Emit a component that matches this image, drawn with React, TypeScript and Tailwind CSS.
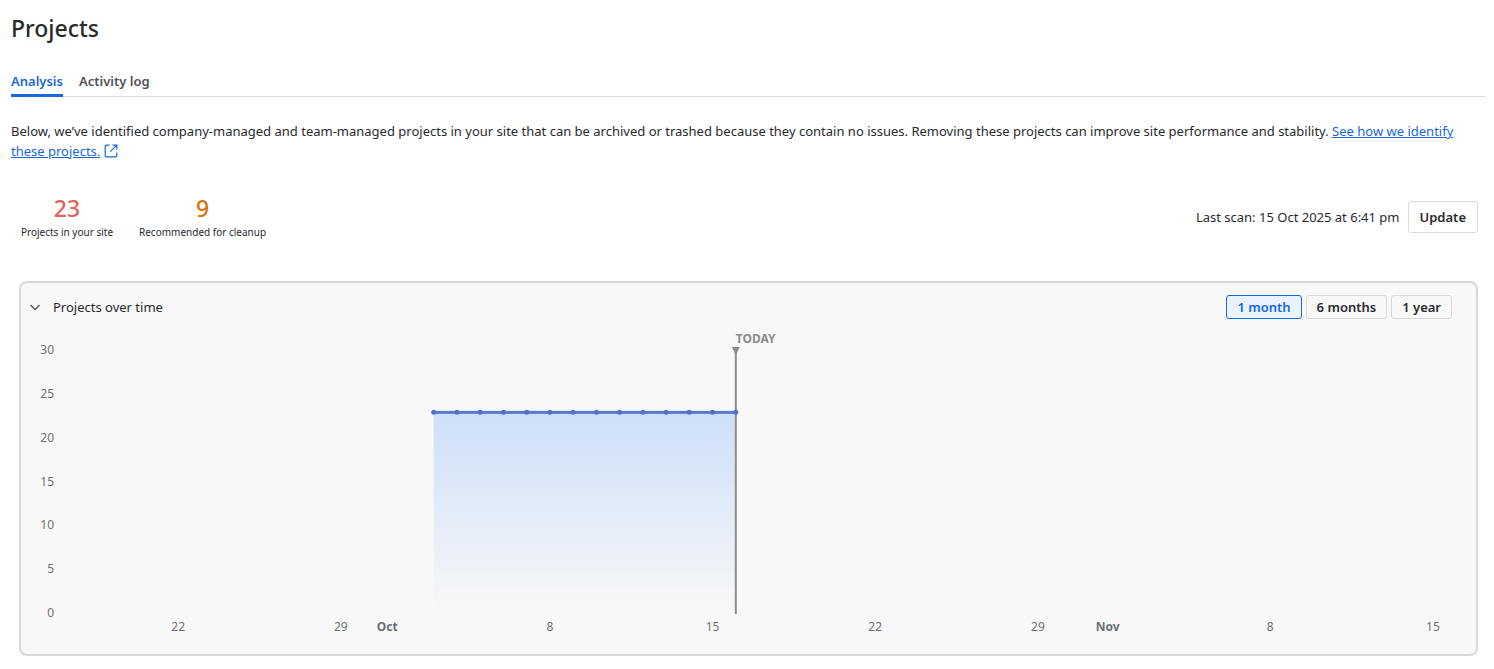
import { useState } from 'react';

interface Tick {
  day: number;
  label: string;
  bold?: boolean;
}

const TABS = ['Analysis', 'Activity log'];
const RANGES = ['1 month', '6 months', '1 year'];

// Days are counted from 22 Sep
const X_TICKS: Tick[] = [
  { day: 0, label: '22' },
  { day: 7, label: '29' },
  { day: 9, label: 'Oct', bold: true },
  { day: 16, label: '8' },
  { day: 23, label: '15' },
  { day: 30, label: '22' },
  { day: 37, label: '29' },
  { day: 40, label: 'Nov', bold: true },
  { day: 47, label: '8' },
  { day: 54, label: '15' },
];
const Y_TICKS = [30, 25, 20, 15, 10, 5, 0];

const FIRST_DAY = 11;
const TODAY = 24;
const POINTS = Array.from({ length: TODAY - FIRST_DAY + 1 }, (_, i) => ({ day: FIRST_DAY + i, total: 23 }));

const PLOT_TOP = 32;
const PLOT_BOTTOM = 295;

const toPercent = (day: number) => 10.8 + day * 1.597;
const toX = (day: number) => `${toPercent(day)}%`;
const toY = (value: number) => PLOT_BOTTOM - (value / 30) * (PLOT_BOTTOM - PLOT_TOP);

function ProjectsChart() {
  return (
    <svg className="block w-full h-[335px] text-xs" role="img" aria-label="Projects over time">
      <defs>
        <linearGradient id="area" x1="0" y1="0" x2="0" y2="1">
          <stop offset="0" stopColor="#cddff8" />
          <stop offset="1" stopColor="#f8f8f8" />
        </linearGradient>
      </defs>

      {Y_TICKS.map((v) => (
        <text key={v} x="33" y={toY(v) + 3} textAnchor="end" className="fill-[#6f7175]">
          {v}
        </text>
      ))}
      {X_TICKS.map((t) => (
        <text
          key={t.day}
          x={toX(t.day)}
          y="312"
          textAnchor="middle"
          className={t.bold ? 'fill-[#6b6e73] font-bold' : 'fill-[#6f7175]'}
        >
          {t.label}
        </text>
      ))}

      <rect
        x={toX(FIRST_DAY)}
        y={toY(23)}
        width={`${toPercent(TODAY) - toPercent(FIRST_DAY)}%`}
        height={PLOT_BOTTOM - toY(23)}
        fill="url(#area)"
      />
      {POINTS.slice(1).map((p, i) => (
        <line
          key={p.day}
          x1={toX(POINTS[i].day)}
          y1={toY(POINTS[i].total)}
          x2={toX(p.day)}
          y2={toY(p.total)}
          stroke="#5779cd"
          strokeWidth="3"
        />
      ))}

      {/* today marker */}
      <line x1={toX(TODAY)} y1="31" x2={toX(TODAY)} y2={PLOT_BOTTOM} stroke="#8c8c8c" strokeWidth="2" />
      <svg x={toX(TODAY)} y="28" overflow="visible">
        <path d="M-4 0h8l-4 8z" fill="#8c8c8c" />
      </svg>
      <text x={toX(TODAY)} y="24" className="fill-[#8c8c8c] font-bold">
        TODAY
      </text>

      {POINTS.map((p) => (
        <circle key={p.day} cx={toX(p.day)} cy={toY(p.total)} r="2.5" fill="#5470c6" />
      ))}
    </svg>
  );
}

function Stat({ value, label, color }: { value: number; label: string; color: string }) {
  return (
    <div className="min-w-24 text-center">
      <div className={`text-[23px] leading-7 font-medium ${color}`}>{value}</div>
      <div className="mt-0.5 text-[10px] leading-4">{label}</div>
    </div>
  );
}

export default function App() {
  const [tab, setTab] = useState('Analysis');
  const [range, setRange] = useState('1 month');
  const [open, setOpen] = useState(true);

  return (
    <main className="pt-3.5 pr-2 pb-3 pl-[11px] bg-white text-[#292a2e] text-[13px] leading-5 font-['Segoe_UI','Noto_Sans',sans-serif]">
      <h1 className="text-[23px] leading-7 font-medium">Projects</h1>

      <div role="tablist" className="mt-[29px] flex gap-4 border-b border-[#dddee1]">
        {TABS.map((t) => (
          <button
            key={t}
            role="tab"
            aria-selected={tab === t}
            onClick={() => setTab(t)}
            className={`-mb-px pb-[3px] border-b-3 font-semibold ${
              tab === t ? 'border-[#1868db] text-[#1868db]' : 'border-transparent text-[#505258]'
            }`}
          >
            {t}
          </button>
        ))}
      </div>

      <p className="mt-6">
        Below, we’ve identified company-managed and team-managed projects in your site that can be archived or trashed
        because they contain no issues. Removing these projects can improve site performance and stability.{' '}
        <a href="#identify" className="text-[#1868db]">
          <span className="underline">See how we identify these projects.</span>
          <svg
            className="inline ml-1 size-3.5 align-[-2px]"
            viewBox="0 0 14 14"
            fill="none"
            stroke="currentColor"
            strokeWidth="1.2"
            aria-hidden="true"
          >
            <path d="M5.5 1.2H2.2a1 1 0 0 0-1 1v9.6a1 1 0 0 0 1 1h9.6a1 1 0 0 0 1-1V8.5M8.5 1.2h4.3v4.3M12.8 1.2L6.3 7.7" />
          </svg>
        </a>
      </p>

      <div className="mt-[33px] pl-2 pr-2 flex items-center justify-between">
        <div className="flex gap-6">
          <Stat value={23} label="Projects in your site" color="text-[#e2635a]" />
          <Stat value={9} label="Recommended for cleanup" color="text-[#d97008]" />
        </div>
        <div className="flex items-center gap-2">
          <span>Last scan: 15 Oct 2025 at 6:41 pm</span>
          <button className="h-8 px-[11px] bg-white border border-[#d9dade] rounded-[3px] font-semibold">Update</button>
        </div>
      </div>

      <section className="mt-[41px] ml-2 mr-2 bg-[#f8f8f8] border-2 border-[#d8d8d8] rounded-lg">
        <div className="pt-3 pl-2 pr-6 flex items-center justify-between">
          <button aria-expanded={open} onClick={() => setOpen(!open)} className="flex items-center gap-3">
            <svg
              className={open ? 'w-3 h-3' : 'w-3 h-3 -rotate-90'}
              viewBox="0 0 12 12"
              fill="none"
              stroke="#505258"
              strokeWidth="1.3"
              aria-hidden="true"
            >
              <path d="M1.5 4L6 8.5L10.5 4" />
            </svg>
            Projects over time
          </button>
          <div className="flex gap-1">
            {RANGES.map((r) => (
              <button
                key={r}
                aria-pressed={range === r}
                onClick={() => setRange(r)}
                className={`h-6 px-2.5 border rounded-[3px] leading-5 font-semibold ${
                  range === r ? 'bg-[#e9f2fe] border-[#1868db] text-[#1868db]' : 'border-[#d9dade]'
                }`}
              >
                {r}
              </button>
            ))}
          </div>
        </div>
        {open && <ProjectsChart />}
      </section>
    </main>
  );
}
